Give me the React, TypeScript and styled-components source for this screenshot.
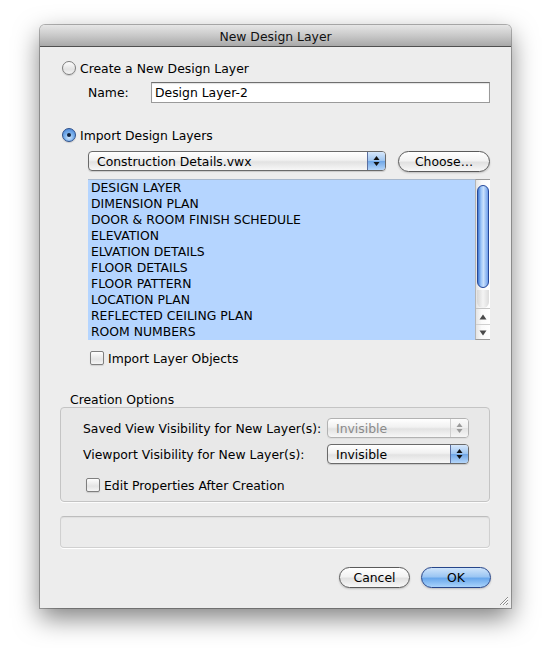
import React from 'react';
import styled, { createGlobalStyle } from 'styled-components';

const Global = createGlobalStyle`
  html, body { margin: 0; padding: 0; background: #ffffff; }
  body {
    font-family: "Lucida Grande", "DejaVu Sans", sans-serif;
    font-size: 12.4px;
    color: #000;
  }
  * { box-sizing: border-box; }
`;

const FS = '12.4px';

const Page = styled.div`
  padding: 25px 0 40px 40px;
`;

const Window = styled.div`
  position: relative;
  width: 471px;
  height: 583px;
  background: #ededed;
  border-radius: 5px 5px 0 0;
  box-shadow: 0 0 0 1px rgba(0, 0, 0, 0.28), 0 10px 26px rgba(0, 0, 0, 0.5);
  display: flex;
  flex-direction: column;
`;

const TitleBar = styled.div`
  height: 22px;
  flex: none;
  border-bottom: 1px solid #4f4f4f;
  border-radius: 5px 5px 0 0;
  background: linear-gradient(#e6e6e6, #c9c9c9 50%, #a8a8a8);
  display: flex;
  align-items: center;
  justify-content: center;
  font-size: ${FS};
  color: #111;
  padding-top: 1px;
`;

const Body = styled.div`
  flex: 1;
  display: flex;
  flex-direction: column;
  padding: 0 21px 0 20px;
`;

const Row = styled.div<{ $mt: number; $h: number; $indent?: number }>`
  display: flex;
  align-items: center;
  margin-top: ${p => p.$mt}px;
  height: ${p => p.$h}px;
  padding-left: ${p => p.$indent ?? 0}px;
  flex: none;
`;

const Label = styled.span<{ $gap?: number }>`
  margin-left: ${p => p.$gap ?? 0}px;
  font-size: ${FS};
  white-space: nowrap;
`;

const RadioDot = styled.span<{ $on?: boolean }>`
  width: 14px;
  height: 14px;
  border-radius: 50%;
  flex: none;
  position: relative;
  border: 1px solid ${p => (p.$on ? '#2c4f8a' : '#7d7d7d')};
  background: ${p =>
    p.$on
      ? 'radial-gradient(circle at 50% 70%, #cfe6ff 0%, #79b0ec 45%, #3f7bd0 100%)'
      : 'linear-gradient(#fdfdfd, #e2e2e2 60%, #f4f4f4)'};
  box-shadow: 0 1px 1px rgba(0, 0, 0, 0.15);
  &::after {
    content: '';
    display: ${p => (p.$on ? 'block' : 'none')};
    position: absolute;
    left: 4px;
    top: 4px;
    width: 4px;
    height: 4px;
    border-radius: 50%;
    background: #10203a;
  }
`;

const CheckBox = styled.span`
  width: 14px;
  height: 14px;
  flex: none;
  border: 1px solid #7f7f7f;
  border-radius: 2px;
  background: linear-gradient(#fefefe, #e4e4e4 60%, #f5f5f5);
  box-shadow: 0 1px 1px rgba(0, 0, 0, 0.12);
`;

const NameLabel = styled.span`
  width: 63px;
  font-size: ${FS};
  flex: none;
`;

const TextInput = styled.div`
  flex: 1;
  height: 21px;
  background: #fff;
  border: 1px solid #9a9a9a;
  border-top-color: #6f6f6f;
  box-shadow: inset 0 1px 1px rgba(0, 0, 0, 0.12);
  display: flex;
  align-items: center;
  padding-left: 3px;
  font-size: ${FS};
`;

const Popup = styled.div<{ $w?: number; $disabled?: boolean }>`
  ${p => (p.$w ? `width: ${p.$w}px;` : 'flex: 1;')}
  height: 20px;
  flex-shrink: 0;
  border: 1px solid ${p => (p.$disabled ? '#b2b2b2' : '#6a6a6a')};
  border-radius: 4px;
  background: linear-gradient(#ffffff, #f1f1f1 45%, #e2e2e2 55%, #f7f7f7);
  display: flex;
  align-items: stretch;
  overflow: hidden;
  color: ${p => (p.$disabled ? '#8a8a8a' : '#000')};
  font-size: ${FS};
  box-shadow: 0 1px 1px rgba(0, 0, 0, ${p => (p.$disabled ? 0.05 : 0.15)});
`;

const PopupText = styled.span`
  flex: 1;
  display: flex;
  align-items: center;
  padding-left: 8px;
  white-space: nowrap;
`;

const PopupArrows = styled.span<{ $disabled?: boolean }>`
  width: 18px;
  flex: none;
  border-left: 1px solid ${p => (p.$disabled ? '#cfcfcf' : '#5b6fa0')};
  background: ${p =>
    p.$disabled
      ? 'linear-gradient(#fbfbfb, #eeeeee 50%, #e3e3e3 51%, #f6f6f6)'
      : 'linear-gradient(#d7e8fc, #9cc4f0 50%, #6fa6e6 51%, #b5d6fa)'};
  display: flex;
  align-items: center;
  justify-content: center;
`;

const PillButton = styled.div<{ $w: number; $default?: boolean; $ml?: number }>`
  width: ${p => p.$w}px;
  height: 21px;
  margin-left: ${p => p.$ml ?? 0}px;
  flex: none;
  border-radius: 11px;
  border: 1px solid ${p => (p.$default ? '#27468a' : '#5a5a5a')};
  background: ${p =>
    p.$default
      ? 'linear-gradient(#cfe4fb, #9cc6f3 45%, #6aa8ec 55%, #a9d3fb)'
      : 'linear-gradient(#ffffff, #f3f3f3 45%, #e1e1e1 55%, #f8f8f8)'};
  box-shadow: 0 1px 2px rgba(0, 0, 0, 0.2);
  display: flex;
  align-items: center;
  justify-content: center;
  font-size: ${FS};
`;

const List = styled.div`
  margin-top: 8px;
  height: 161px;
  flex: none;
  display: flex;
  background: #b5d5ff;
  border-top: 1px solid #a8b8cc;
  margin-left: 28px;
`;

const ListItems = styled.div`
  flex: 1;
  display: flex;
  flex-direction: column;
`;

const ListItem = styled.div`
  height: 16px;
  line-height: 16px;
  padding-left: 3px;
  font-size: 12.4px;
  white-space: nowrap;
`;

const ScrollBar = styled.div`
  width: 15px;
  flex: none;
  background: linear-gradient(90deg, #e4e4e4, #fafafa 40%, #ffffff);
  border-left: 1px solid #b5b5b5;
  border-bottom: 1px solid #9a9a9a;
  display: flex;
  flex-direction: column;
  margin-top: -1px;
  border-top: 1px solid #9a9a9a;
`;

const Track = styled.div`
  flex: 1;
  padding: 5px 1px 0 1px;
  display: flex;
  flex-direction: column;
`;

const Thumb = styled.div`
  height: 103px;
  border-radius: 7px;
  border: 1px solid #25489a;
  background: linear-gradient(90deg, #3f78d2, #9cc5f8 30%, #c8e0fc 55%, #6f9feb);
`;

const TrackCap = styled.div`
  height: 18px;
  margin-top: 2px;
  border-radius: 0 0 7px 7px;
  background: linear-gradient(90deg, #d6d6d6, #f4f4f4 50%, #dcdcdc);
`;

const ScrollArrow = styled.div<{ $top?: boolean }>`
  height: 16px;
  flex: none;
  border-top: 1px solid ${p => (p.$top ? '#c4c4c4' : '#d0d0d0')};
  display: flex;
  align-items: center;
  justify-content: center;
`;

const SectionTitle = styled.div`
  margin-top: 24px;
  height: 16px;
  flex: none;
  padding-left: 10px;
  font-size: ${FS};
  display: flex;
  align-items: center;
`;

const GroupBox = styled.div`
  height: 95px;
  flex: none;
  border: 1px solid #c4c4c4;
  border-radius: 4px;
  background: #e8e8e8;
  box-shadow: 0 1px 0 rgba(255, 255, 255, 0.8);
  padding: 10px 21px 0 22px;
  display: flex;
  flex-direction: column;
`;

const OptionRow = styled.div<{ $mt: number }>`
  display: flex;
  align-items: center;
  height: 20px;
  margin-top: ${p => p.$mt}px;
`;

const OptionLabel = styled.span`
  width: 244px;
  flex: none;
  font-size: ${FS};
  white-space: nowrap;
`;

const StatusBox = styled.div`
  margin-top: 14px;
  height: 32px;
  flex: none;
  border: 1px solid #d0d0d0;
  border-top-color: #bdbdbd;
  border-radius: 4px;
  background: #ebebeb;
  box-shadow: 0 1px 0 #ffffff, inset 0 1px 1px rgba(0, 0, 0, 0.05);
`;

const ButtonRow = styled.div`
  margin-top: 19px;
  display: flex;
  justify-content: flex-end;
  margin-right: -1px;
`;

const Grip = styled.svg`
  position: absolute;
  right: 2px;
  bottom: 2px;
`;

const UpDown = ({ color }: { color: string }) => (
  <svg width="7" height="12" viewBox="0 0 7 12">
    <path d="M3.5 1 L6.5 5 L0.5 5 Z" fill={color} />
    <path d="M3.5 11 L6.5 7 L0.5 7 Z" fill={color} />
  </svg>
);

const Tri = ({ up }: { up?: boolean }) => (
  <svg width="8" height="6" viewBox="0 0 8 6">
    <path d={up ? 'M4 0.5 L7.5 5.5 L0.5 5.5 Z' : 'M4 5.5 L7.5 0.5 L0.5 0.5 Z'} fill="#4a4a4a" />
  </svg>
);

const layers = [
  'DESIGN LAYER',
  'DIMENSION PLAN',
  'DOOR & ROOM FINISH SCHEDULE',
  'ELEVATION',
  'ELVATION DETAILS',
  'FLOOR DETAILS',
  'FLOOR PATTERN',
  'LOCATION PLAN',
  'REFLECTED CEILING PLAN',
  'ROOM NUMBERS',
];

export default function App() {
  return (
    <>
      <Global />
      <Page>
        <Window>
          <TitleBar>New Design Layer</TitleBar>
          <Body>
            <Row $mt={12} $h={18} $indent={2}>
              <RadioDot />
              <Label $gap={4}>Create a New Design Layer</Label>
            </Row>
            <Row $mt={5} $h={21} $indent={28}>
              <NameLabel>Name:</NameLabel>
              <TextInput>Design Layer-2</TextInput>
            </Row>
            <Row $mt={23} $h={18} $indent={2}>
              <RadioDot $on />
              <Label $gap={4}>Import Design Layers</Label>
            </Row>
            <Row $mt={7} $h={20} $indent={28}>
              <Popup>
                <PopupText>Construction Details.vwx</PopupText>
                <PopupArrows>
                  <UpDown color="#111" />
                </PopupArrows>
              </Popup>
              <PillButton $w={92} $ml={12}>Choose…</PillButton>
            </Row>
            <List>
              <ListItems>
                {layers.map(l => (
                  <ListItem key={l}>{l}</ListItem>
                ))}
              </ListItems>
              <ScrollBar>
                <Track>
                  <Thumb />
                  <TrackCap />
                </Track>
                <ScrollArrow $top>
                  <Tri up />
                </ScrollArrow>
                <ScrollArrow>
                  <Tri />
                </ScrollArrow>
              </ScrollBar>
            </List>
            <Row $mt={9} $h={18} $indent={30}>
              <CheckBox />
              <Label $gap={4}>Import Layer Objects</Label>
            </Row>
            <SectionTitle>Creation Options</SectionTitle>
            <GroupBox>
              <OptionRow $mt={0}>
                <OptionLabel>Saved View Visibility for New Layer(s):</OptionLabel>
                <Popup $w={142} $disabled>
                  <PopupText>Invisible</PopupText>
                  <PopupArrows $disabled>
                    <UpDown color="#9a9a9a" />
                  </PopupArrows>
                </Popup>
              </OptionRow>
              <OptionRow $mt={6}>
                <OptionLabel>Viewport Visibility for New Layer(s):</OptionLabel>
                <Popup $w={142}>
                  <PopupText>Invisible</PopupText>
                  <PopupArrows>
                    <UpDown color="#111" />
                  </PopupArrows>
                </Popup>
              </OptionRow>
              <Row $mt={12} $h={18} $indent={3}>
                <CheckBox />
                <Label $gap={4}>Edit Properties After Creation</Label>
              </Row>
            </GroupBox>
            <StatusBox />
            <ButtonRow>
              <PillButton $w={71}>Cancel</PillButton>
              <PillButton $w={70} $ml={11} $default>OK</PillButton>
            </ButtonRow>
          </Body>
          <Grip width="12" height="12" viewBox="0 0 12 12">
            <path d="M11 3 L3 11 M11 6 L6 11 M11 9 L9 11" stroke="#8c8c8c" strokeWidth="1" />
            <path d="M11 4 L4 11 M11 7 L7 11" stroke="#ffffff" strokeWidth="1" />
          </Grip>
        </Window>
      </Page>
    </>
  );
}
